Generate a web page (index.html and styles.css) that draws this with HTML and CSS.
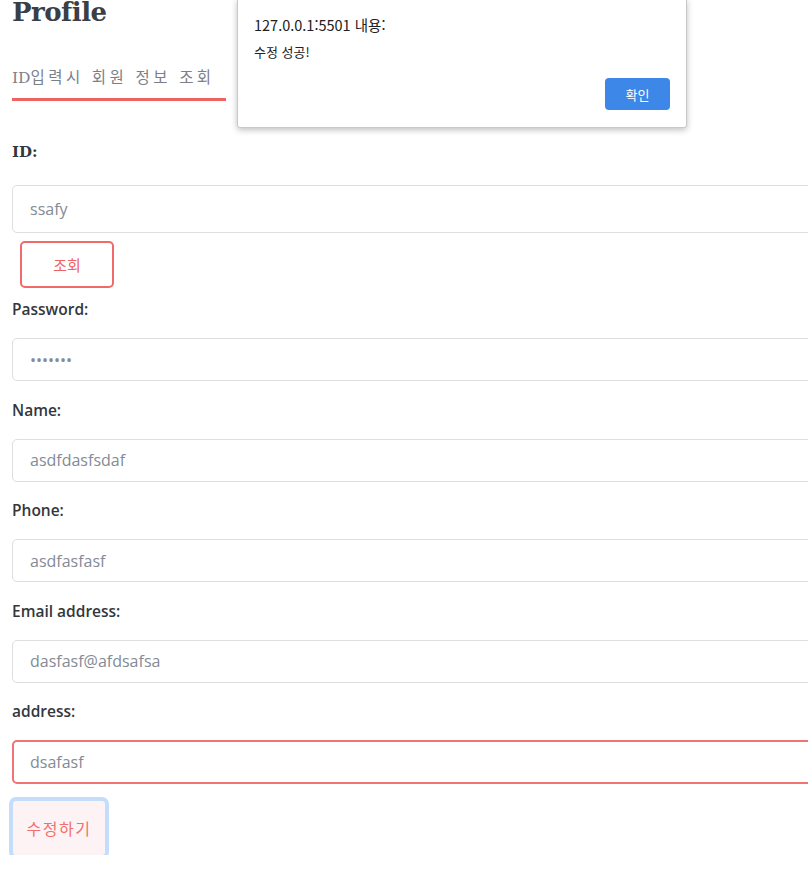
FILE: index.html
```html
<!DOCTYPE html>
<html lang="ko">
<head>
<meta charset="utf-8">
<title>Profile</title>
<link rel="stylesheet" href="styles.css">
</head>
<body>
<div class="page">
  <h1 class="title">Profile</h1>
  <div class="tabs"><span class="tab"><span class="tab-id">ID</span>입력시 회원 정보 조회</span></div>
  <form class="form">
    <label class="label label-id">ID:</label>
    <input class="field field-id" type="text" value="ssafy">
    <button type="button" class="btn-search">조회</button>

    <label class="label label-first">Password:</label>
    <input class="field" type="password" value="1234567">

    <label class="label">Name:</label>
    <input class="field" type="text" value="asdfdasfsdaf">

    <label class="label">Phone:</label>
    <input class="field" type="text" value="asdfasfasf">

    <label class="label">Email address:</label>
    <input class="field" type="text" value="dasfasf@afdsafsa">

    <label class="label">address:</label>
    <input class="field field-focus" type="text" value="dsafasf">

    <button type="button" class="btn-submit">수정하기</button>
  </form>
</div>

<div class="dialog">
  <div class="dialog-title">127.0.0.1:5501 내용:</div>
  <div class="dialog-msg">수정 성공!</div>
  <div class="dialog-actions"><button type="button" class="dialog-ok">확인</button></div>
</div>
</body>
</html>
```
FILE: styles.css
```css
html, body {
  margin: 0;
  padding: 0;
  overflow: hidden;
  background: #fff;
}
body {
  font-family: "Open Sans", "Noto Sans CJK KR", sans-serif;
  color: #333;
}
.page {
  padding-left: 12px;
  width: 1000px;
}
.title {
  margin: 0;
  font-family: "DejaVu Serif", serif;
  font-weight: 700;
  font-size: 26px;
  line-height: 24px;
  color: #3a3f45;
  letter-spacing: -0.5px;
}
.tabs {
  margin-top: 42px;
}
.tab {
  display: inline-block;
  width: 214px;
  padding-bottom: 10px;
  border-bottom: 3px solid #f06262;
  font-family: "DejaVu Serif", "Noto Sans CJK KR", serif;
  font-size: 15.5px;
  line-height: 20px;
  letter-spacing: 3.4px;
  color: #7b8088;
  white-space: nowrap;
}
.tab-id {
  letter-spacing: 0;
}
.form {
  display: flex;
  flex-direction: column;
  align-items: flex-start;
}
.label {
  display: block;
  margin-top: 18.5px;
  font-weight: 600;
  font-size: 15.5px;
  line-height: 20px;
  color: #33373c;
}
.label-id {
  margin-top: 41px;
  font-family: "DejaVu Serif", serif;
  font-weight: 700;
  font-size: 15px;
}
.label-first {
  margin-top: 11px;
}
.field {
  box-sizing: border-box;
  width: 900px;
  height: 43px;
  margin-top: 19px;
  padding: 0 17px;
  border: 1px solid #dcdee2;
  border-radius: 5px;
  font-family: "Open Sans", sans-serif;
  font-size: 16px;
  color: #838b96;
  background: #fff;
  outline: none;
}
.field-id {
  height: 48px;
  margin-top: 23px;
}
.field-focus {
  height: 44px;
  border: 2px solid #f07474;
  padding: 0 16px;
}
.btn-search {
  box-sizing: border-box;
  width: 94px;
  height: 47px;
  margin: 8px 0 0 8px;
  border: 2px solid #f06a6a;
  border-radius: 5px;
  background: #fff;
  color: #f06262;
  font-family: "Noto Sans CJK KR", sans-serif;
  font-size: 15px;
}
.btn-submit {
  box-sizing: border-box;
  width: 92px;
  height: 54px;
  margin: 17px 0 0 1px;
  border: none;
  border-radius: 3px;
  box-shadow: 0 0 0 4px #c3ddfb;
  background: #fdf3f4;
  color: #f07070;
  font-family: "Noto Sans CJK KR", sans-serif;
  font-size: 16px;
  letter-spacing: 1.5px;
}
.dialog {
  position: absolute;
  top: -1px;
  left: 237px;
  box-sizing: border-box;
  width: 450px;
  height: 129px;
  padding: 15px 16px 0 16px;
  background: #fff;
  border: 1px solid #c8c8c8;
  border-radius: 0 0 3px 3px;
  box-shadow: 0 2px 6px rgba(0, 0, 0, 0.25);
  font-family: "Noto Sans CJK KR", sans-serif;
  color: #202124;
}
.dialog-title {
  font-size: 14.5px;
  line-height: 20px;
}
.dialog-msg {
  margin-top: 8px;
  font-size: 13px;
  line-height: 18px;
}
.dialog-actions {
  display: flex;
  justify-content: flex-end;
  margin-top: 17px;
}
.dialog-ok {
  width: 65px;
  height: 32px;
  border: none;
  border-radius: 4px;
  background: #3d87e8;
  color: #fff;
  font-family: "Noto Sans CJK KR", sans-serif;
  font-size: 13px;
}
```
